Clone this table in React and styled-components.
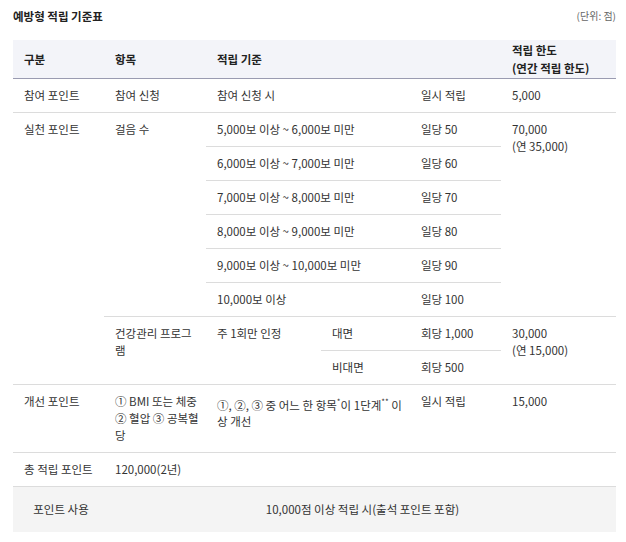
import React from 'react';
import styled, { createGlobalStyle } from 'styled-components';

const GlobalStyle = createGlobalStyle`
  body {
    margin: 0;
    background: #fff;
    font-family: "Noto Sans CJK KR", "Noto Sans", sans-serif;
    color: #333;
  }
`;

const Page = styled.div`
  padding: 7px 10px 0 13px;
  width: 603px;
`;

const TitleBar = styled.div`
  display: flex;
  justify-content: space-between;
  align-items: center;
  height: 17px;
  margin-bottom: 16px;
`;

const Title = styled.h3`
  margin: 0;
  font-size: 11.5px;
  font-weight: 700;
  color: #222;
`;

const Unit = styled.span`
  font-size: 10px;
  color: #666;
`;

const Table = styled.table`
  width: 603px;
  border-collapse: collapse;
  table-layout: fixed;
  font-size: 11.5px;
`;

const Head = styled.th`
  background: #f3f4f9;
  border-bottom: 1px solid #9a9bb1;
  text-align: left;
  font-weight: 700;
  color: #222;
  line-height: 18px;
  height: 38px;
  box-sizing: border-box;
  padding: 0 6px 0 11px;
  vertical-align: middle;
`;

const Cell = styled.td`
  border-bottom: 1px solid #dcdcdc;
  padding: 8px 6px 8px 11px;
  line-height: 17px;
  vertical-align: top;
  word-break: break-all;
`;

const FootCell = styled.td`
  background: #f4f4f4;
  height: 46px;
  box-sizing: border-box;
  padding: 0 6px 0 11px;
  text-align: center;
  vertical-align: middle;
  line-height: 17px;
`;

const Mark = styled.sup`
  font-size: 8px;
`;

const steps = [
  ['5,000보 이상 ~ 6,000보 미만', '일당 50'],
  ['6,000보 이상 ~ 7,000보 미만', '일당 60'],
  ['7,000보 이상 ~ 8,000보 미만', '일당 70'],
  ['8,000보 이상 ~ 9,000보 미만', '일당 80'],
  ['9,000보 이상 ~ 10,000보 미만', '일당 90'],
  ['10,000보 이상', '일당 100'],
];

export default function App() {
  return (
    <Page>
      <GlobalStyle />
      <TitleBar>
        <Title>예방형 적립 기준표</Title>
        <Unit>(단위: 점)</Unit>
      </TitleBar>
      <Table>
        <colgroup>
          <col style={{ width: 91 }} />
          <col style={{ width: 102 }} />
          <col style={{ width: 115 }} />
          <col style={{ width: 89 }} />
          <col style={{ width: 91 }} />
          <col style={{ width: 115 }} />
        </colgroup>
        <thead>
          <tr>
            <Head>구분</Head>
            <Head>항목</Head>
            <Head colSpan={3}>적립 기준</Head>
            <Head>적립 한도<br />(연간 적립 한도)</Head>
          </tr>
        </thead>
        <tbody>
          <tr>
            <Cell>참여 포인트</Cell>
            <Cell>참여 신청</Cell>
            <Cell colSpan={2}>참여 신청 시</Cell>
            <Cell>일시 적립</Cell>
            <Cell>5,000</Cell>
          </tr>
          {steps.map(([rule, point], i) => (
            <tr key={rule}>
              {i === 0 && <Cell rowSpan={8}>실천 포인트</Cell>}
              {i === 0 && <Cell rowSpan={6}>걸음 수</Cell>}
              <Cell colSpan={2}>{rule}</Cell>
              <Cell>{point}</Cell>
              {i === 0 && <Cell rowSpan={6}>70,000<br />(연 35,000)</Cell>}
            </tr>
          ))}
          <tr>
            <Cell rowSpan={2}>건강관리 프로그램</Cell>
            <Cell rowSpan={2}>주 1회만 인정</Cell>
            <Cell>대면</Cell>
            <Cell>회당 1,000</Cell>
            <Cell rowSpan={2}>30,000<br />(연 15,000)</Cell>
          </tr>
          <tr>
            <Cell>비대면</Cell>
            <Cell>회당 500</Cell>
          </tr>
          <tr>
            <Cell>개선 포인트</Cell>
            <Cell>① BMI 또는 체중<br />② 혈압 ③ 공복혈당</Cell>
            <Cell colSpan={2}>①, ②, ③ 중 어느 한 항목<Mark>*</Mark>이 1단계<Mark>**</Mark> 이상 개선</Cell>
            <Cell>일시 적립</Cell>
            <Cell>15,000</Cell>
          </tr>
          <tr>
            <Cell>총 적립 포인트</Cell>
            <Cell colSpan={5}>120,000(2년)</Cell>
          </tr>
        </tbody>
        <tfoot>
          <tr>
            <FootCell>포인트 사용</FootCell>
            <FootCell colSpan={5}>10,000점 이상 적립 시(출석 포인트 포함)</FootCell>
          </tr>
        </tfoot>
      </Table>
    </Page>
  );
}
